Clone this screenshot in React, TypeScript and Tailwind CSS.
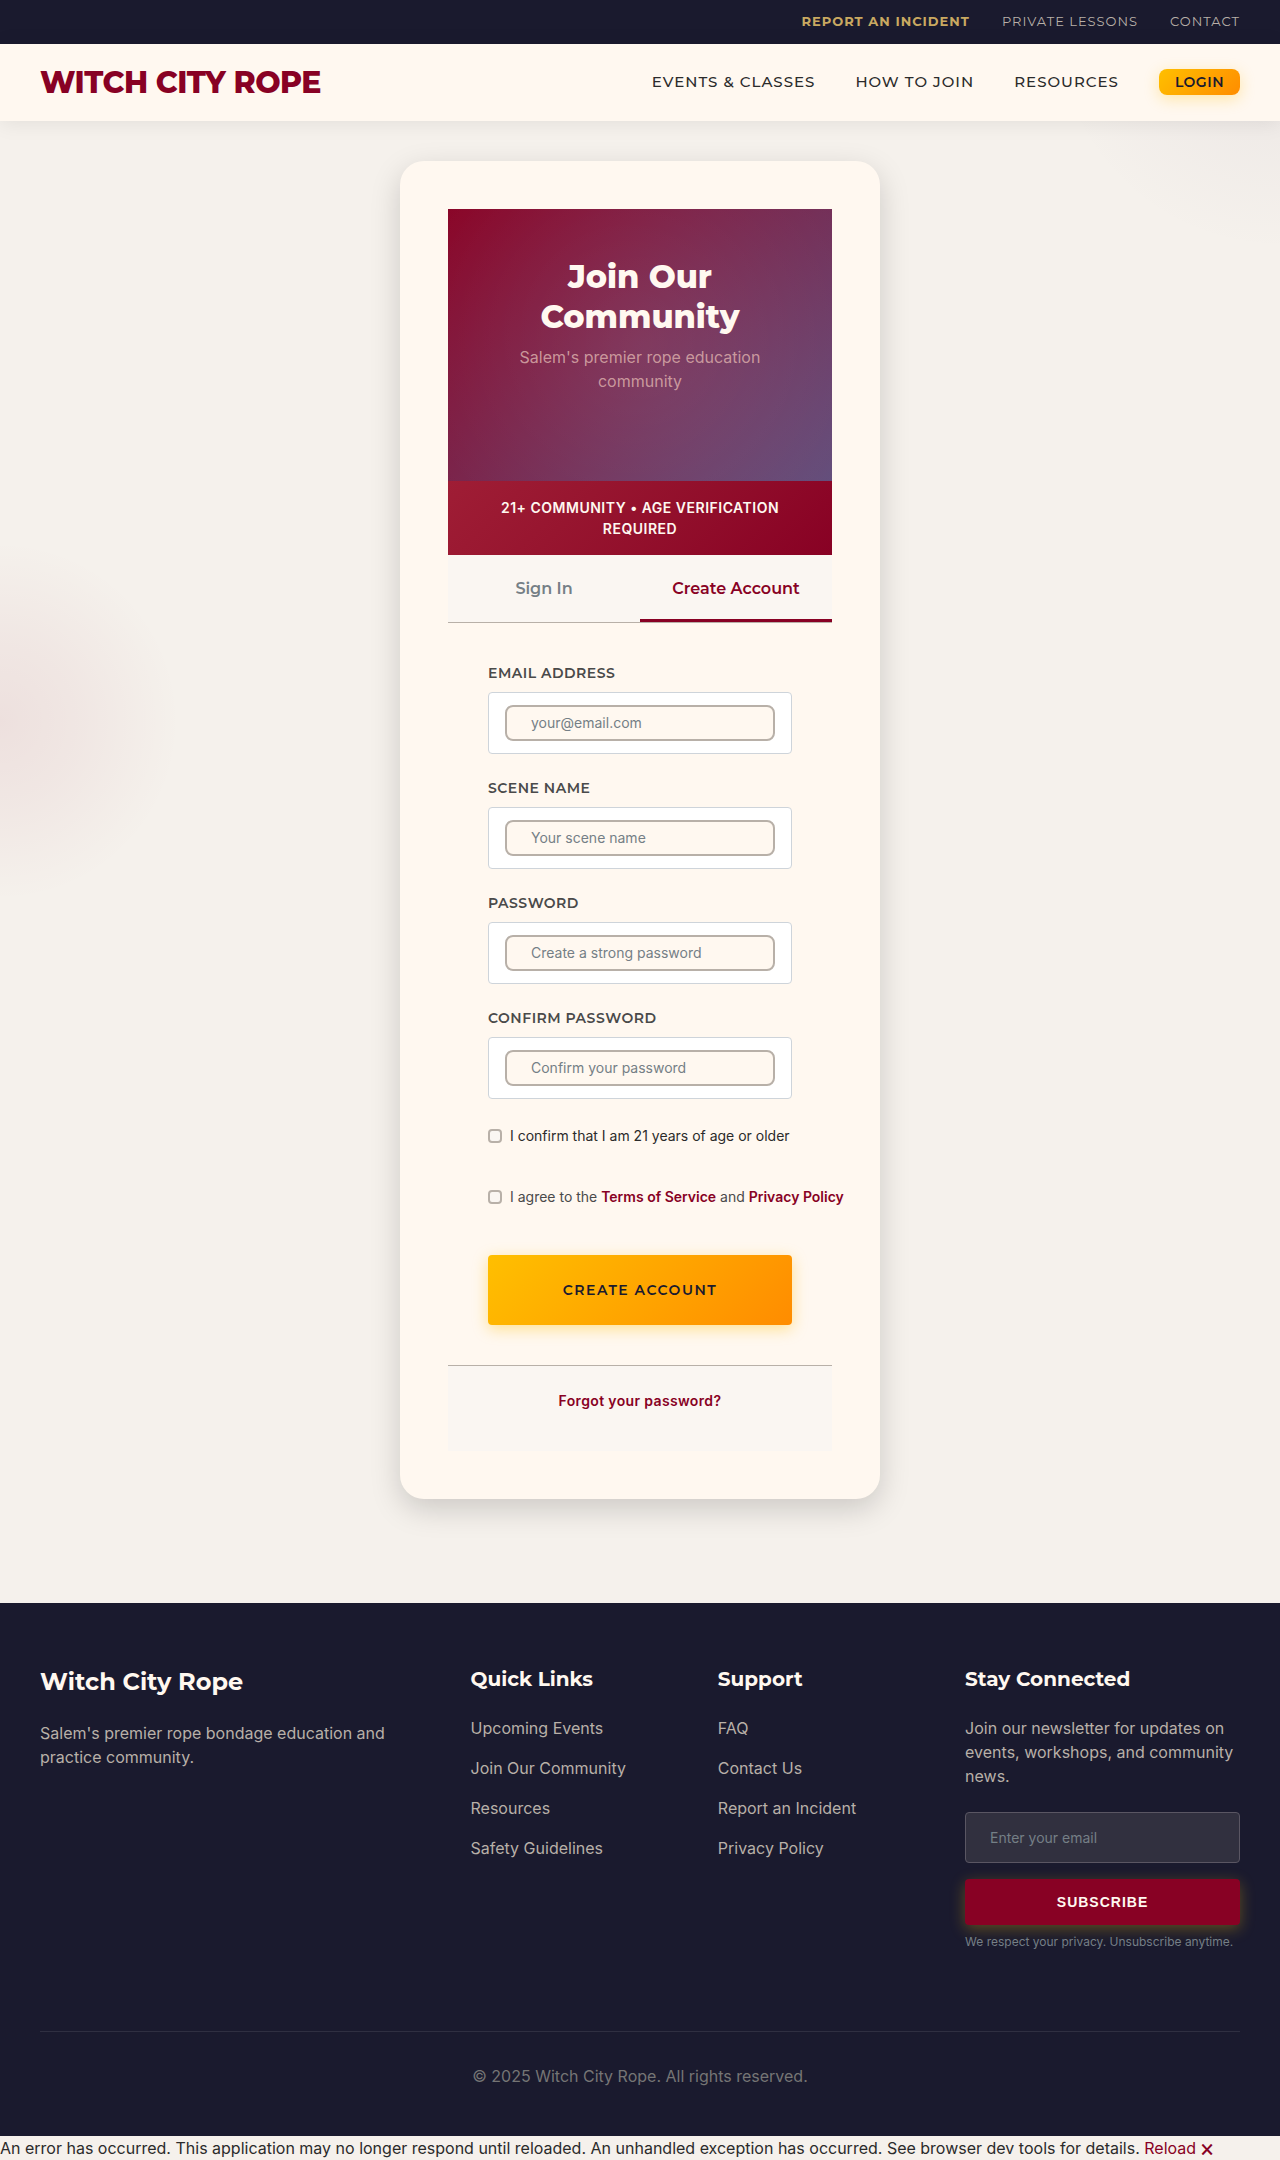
import React from "react";

const display = "font-['Montserrat','Inter',sans-serif]";

function Field({ id, label, placeholder, type }: { id: string; label: string; placeholder: string; type: string }) {
  return (
    <div className="mb-6">
      <label
        htmlFor={id}
        className={`mb-2 block text-sm leading-[21px] font-semibold tracking-[0.5px] text-[#4a4a4a] uppercase ${display}`}
      >
        {label}
      </label>
      <div className="rounded border border-[#ced4da] bg-white px-4 py-3">
        <input
          id={id}
          type={type}
          placeholder={placeholder}
          className="block h-9 w-full rounded-lg border-2 border-[#b8b0a8] bg-[#fff8f0] px-6 pb-0.5 text-sm text-[#2b2b2b] placeholder:text-[#757f86]"
        />
      </div>
    </div>
  );
}

function Check({ id, children, className }: { id: string; children: React.ReactNode; className: string }) {
  return (
    <div className="flex h-[26px] items-center gap-2">
      <input
        id={id}
        type="checkbox"
        className="size-3.5 shrink-0 appearance-none rounded-[4px] border-2 border-[#b8b0a8] bg-[#faf6f2] checked:bg-[#880124]"
      />
      <label htmlFor={id} className={`pb-0.5 text-sm leading-[21px] whitespace-nowrap ${className}`}>
        {children}
      </label>
    </div>
  );
}

function LinkColumn({ title, links }: { title: string; links: string[] }) {
  return (
    <div>
      <h4 className={`mb-6 text-xl leading-[25px] font-bold text-[#fff8f0] ${display}`}>{title}</h4>
      <ul className="flex flex-col gap-4">
        {links.map((l) => (
          <li key={l} className="leading-6">
            <a href="#" className="whitespace-nowrap text-[#b8b0a8]">
              {l}
            </a>
          </li>
        ))}
      </ul>
    </div>
  );
}

export default function App() {
  return (
    <div className="bg-[#f5f1ec] bg-[radial-gradient(circle_at_0px_721px,rgba(136,1,36,0.07)_0px,rgba(136,1,36,0.045)_80px,rgba(136,1,36,0)_180px),radial-gradient(circle_at_100%_20px,rgba(97,75,121,0.07)_0px,rgba(97,75,121,0)_230px)] font-['Inter',sans-serif] text-base leading-6 text-[#2b2b2b]">
      <div
        className={`flex h-11 items-center justify-end gap-8 bg-[#1a1a2e] px-10 pb-0.5 text-[13px] tracking-[1px] text-[#b8b0a8] uppercase ${display}`}
      >
        <a href="#" className="font-bold text-[#c9a961]">Report an Incident</a>
        <a href="#">Private Lessons</a>
        <a href="#">Contact</a>
      </div>

      <header className="flex items-center justify-between bg-[#fff8f0] px-10 py-4 shadow-[0_2px_20px_rgba(0,0,0,0.08)]">
        <a
          href="#"
          className={`text-[30px] leading-[45px] font-extrabold tracking-[-0.5px] text-[#880124] uppercase ${display}`}
        >
          Witch City Rope
        </a>
        <nav className={`flex items-center gap-10 pb-0.5 text-[15px] font-medium tracking-[1px] uppercase ${display}`}>
          <a href="#">Events &amp; Classes</a>
          <a href="#">How to Join</a>
          <a href="#">Resources</a>
          <a
            href="#"
            className="rounded-lg bg-linear-135 from-[#ffbf00] to-[#ff8c00] px-4 text-sm leading-[26px] font-semibold tracking-[0.5px] text-[#1a1a2e] shadow-[0_4px_15px_rgba(255,191,0,0.3)]"
          >
            Login
          </a>
        </nav>
      </header>

      <main className="px-4 pt-10 pb-[104px]">
        <div className="mx-auto max-w-[480px] rounded-3xl bg-[#fff8f0] p-12 shadow-[0_10px_30px_rgba(0,0,0,0.17)]">
          <div className="bg-[radial-gradient(circle,rgba(255,255,255,0.09)_0%,rgba(255,255,255,0.02)_100%),linear-gradient(135deg,#880124_0%,#614b79_100%)] px-10 pt-12 pb-[88px] text-center">
            <h1 className={`mb-2 text-[32px] leading-10 font-extrabold text-[#fff8f0] ${display}`}>
              Join Our Community
            </h1>
            <p className="text-[#d4a5a5]/90">Salem's premier rope education community</p>
          </div>
          <div className="bg-linear-135 from-[#9f1d35] to-[#880124] px-8 py-4 text-center text-sm leading-[21px] font-semibold tracking-[0.5px] text-[#fff8f0] uppercase">
            21+ Community • Age Verification Required
          </div>
          <div className={`flex border-b border-[#b8b0a8] bg-[#faf6f2] leading-6 font-semibold ${display}`}>
            <button type="button" className="flex-1 border-b-3 border-transparent pt-5.5 pb-4.5 text-[#757f86]">
              Sign In
            </button>
            <button type="button" className="flex-1 border-b-3 border-[#880124] pt-5.5 pb-4.5 text-[#880124]">
              Create Account
            </button>
          </div>

          <form className="p-10">
            <Field id="email" type="email" label="Email Address" placeholder="your@email.com" />
            <Field id="scene" type="text" label="Scene Name" placeholder="Your scene name" />
            <Field id="password" type="password" label="Password" placeholder="Create a strong password" />
            <Field id="confirm" type="password" label="Confirm Password" placeholder="Confirm your password" />
            <div className="mb-[45px] flex flex-col gap-[35px]">
              <Check id="age" className="text-[#2b2b2b]">
                I confirm that I am 21 years of age or older
              </Check>
              <Check id="terms" className="text-[#4a4a4a]">
                I agree to the{" "}
                <a href="#" className="font-semibold text-[#880124]">Terms of Service</a> and{" "}
                <a href="#" className="font-semibold text-[#880124]">Privacy Policy</a>
              </Check>
            </div>
            <button
              type="submit"
              className={`block h-[70px] w-full rounded bg-linear-135 from-[#ffbf00] to-[#ff8c00] text-sm font-semibold tracking-[1.5px] text-[#1a1a2e] uppercase shadow-[0_4px_15px_rgba(255,191,0,0.4)] ${display}`}
            >
              Create Account
            </button>
          </form>

          <div className="border-t border-[#b8b0a8] bg-[#faf6f2] pt-6 pb-10 text-center text-sm leading-[21px] font-semibold tracking-wide text-[#880124]">
            <a href="#">Forgot your password?</a>
          </div>
        </div>
      </main>

      <footer className="bg-[#1a1a2e] px-10 pt-16 pb-12 text-[#b8b0a8]">
        <div className="mb-20 grid grid-cols-[2fr_1fr_1fr_1.5fr] gap-16">
          <div>
            <h3 className={`mb-6 text-2xl leading-[30px] font-bold text-[#fff8f0] ${display}`}>Witch City Rope</h3>
            <p>Salem's premier rope bondage education and practice community.</p>
          </div>
          <LinkColumn
            title="Quick Links"
            links={["Upcoming Events", "Join Our Community", "Resources", "Safety Guidelines"]}
          />
          <LinkColumn title="Support" links={["FAQ", "Contact Us", "Report an Incident", "Privacy Policy"]} />
          <form>
            <h4 className={`mb-6 text-xl leading-[25px] font-bold text-[#fff8f0] ${display}`}>Stay Connected</h4>
            <p className="mb-6">Join our newsletter for updates on events, workshops, and community news.</p>
            <input
              type="email"
              aria-label="Newsletter email"
              placeholder="Enter your email"
              className="mb-4 block h-[51px] w-full rounded border border-[#5a5663] bg-[#31303f] px-6 text-sm text-[#fff8f0] placeholder:text-[#757f86]"
            />
            <button
              type="button"
              className="mb-2 block h-[46px] w-full rounded bg-[#880124] font-['Liberation_Sans',sans-serif] text-sm font-bold tracking-[1px] text-[#fff8f0] uppercase shadow-[0_4px_15px_rgba(255,191,0,0.3)]"
            >
              Subscribe
            </button>
            <p className="text-xs leading-[18px] text-[#757f86]">We respect your privacy. Unsubscribe anytime.</p>
          </form>
        </div>
        <div className="border-t border-[#2f2f41] pt-8 text-center text-[#757575]">
          © 2025 Witch City Rope. All rights reserved.
        </div>
      </footer>

      <div className="leading-6">
        An error has occurred. This application may no longer respond until reloaded. An unhandled exception has
        occurred. See browser dev tools for details.{" "}
        <a href="#" className="text-[#880124]">Reload</a>{" "}
        <a href="#" className="text-[#880124]">🗙</a>
      </div>
    </div>
  );
}
